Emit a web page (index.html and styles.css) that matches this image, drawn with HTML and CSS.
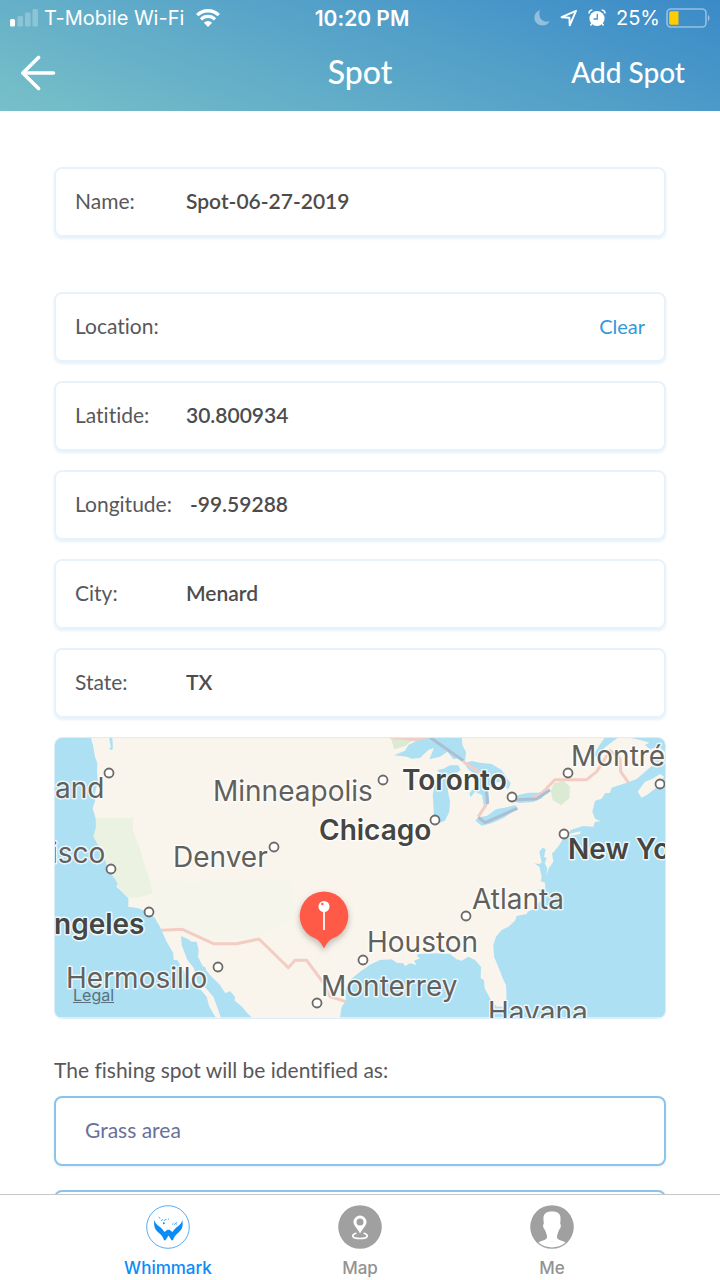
FILE: index.html
```html
<!DOCTYPE html>
<html lang="en">
<head>
<meta charset="utf-8">
<meta name="viewport" content="width=device-width, initial-scale=1">
<title>Spot</title>
<link rel="stylesheet" href="styles.css">
</head>
<body>
<header class="header">
  <div class="status">
    <div class="status-side">
      <svg class="signal" width="28" height="18" viewBox="0 0 28 18" fill="#fff">
        <rect x="0" y="10" width="5" height="7.500" rx="1.500"/>
        <g opacity=".25"><rect x="7.500" y="7" width="5.500" height="10.500" rx="1.500"/><rect x="15" y="3.500" width="5.500" height="14" rx="1.500"/><rect x="22.500" y="0" width="5.500" height="17.500" rx="1.500"/></g>
      </svg>
      <span class="carrier">T-Mobile Wi-Fi</span>
      <svg class="wifi" width="24" height="18" viewBox="0 0 24 18" fill="none" stroke="#fff" stroke-width="3.300">
        <path d="M1.200 6.200a15.300 15.300 0 0 1 21.600 0"/><path d="M5 10.300a9.900 9.900 0 0 1 14 0"/><path d="M12 18 7.900 13.700a5.800 5.800 0 0 1 8.200 0z" fill="#fff" stroke="none"/>
      </svg>
    </div>
    <span class="time">10:20 PM</span>
    <div class="status-side status-right">
      <svg width="16" height="18" viewBox="0 0 16 18"><path d="M6 1C1.500 3 0 6 .5 10c1 7 11.500 9 15.300 2.200C8 14.500 3.500 8 6 1z" fill="#fff" opacity=".4"/></svg>
      <svg class="arrow" width="18" height="18" viewBox="0 0 18 18"><path d="M1.600 8.200 16 1.800 9.700 16.300 9.400 8.700z" fill="none" stroke="#fff" stroke-width="1.900" stroke-linejoin="round"/></svg>
      <svg class="alarm" width="18" height="18" viewBox="0 0 18 18"><circle cx="9" cy="9.500" r="7.600" fill="#fff"/><path d="M1 4.500Q1 1.300 4.300 1M17 4.500Q17 1.300 13.700 1M3.800 14.500 2.500 16.500M14.200 14.500 15.500 16.500" fill="none" stroke="#fff" stroke-width="1.500"/><path d="M9.300 4.800V10H5.500" fill="none" stroke="#4796ca" stroke-width="1.300"/></svg>
      <span>25%</span>
      <svg width="44" height="20" viewBox="0 0 44 20"><rect x="1" y="1" width="39" height="18" rx="4" fill="none" stroke="#fff" stroke-opacity=".45" stroke-width="1.600"/><path d="M42 6.500q3 3.500 0 7z" fill="#fff" opacity=".5"/><path d="M12.500 3.200H5q-1.800 0-1.800 1.800v10q0 1.800 1.800 1.800h7.500z" fill="#fc0"/></svg>
    </div>
  </div>
  <nav class="nav">
    <button class="back" type="button" aria-label="Back"><svg width="36" height="36" viewBox="0 0 36 36" fill="none" stroke="#fff" stroke-width="3.600" stroke-linecap="round" stroke-linejoin="round"><path d="M18.500 2.500 2.800 18l15.700 15.500M3.500 18H33.500"/></svg></button>
    <h1 class="title">Spot</h1>
    <button class="add" type="button">Add Spot</button>
  </nav>
</header>

<main class="content">
  <form class="form">
    <div class="card card-name"><label class="label" for="name">Name:</label><input class="value" id="name" value="Spot-06-27-2019"></div>
    <div class="stack">
      <div class="card"><span class="label">Location:</span><button class="clear" type="button">Clear</button></div>
      <div class="card"><label class="label" for="lat">Latitide:</label><input class="value" id="lat" value="30.800934"></div>
      <div class="card"><label class="label" for="lng">Longitude:</label><input class="value" id="lng" value="-99.59288"></div>
      <div class="card"><label class="label" for="city">City:</label><input class="value" id="city" value="Menard"></div>
      <div class="card"><label class="label" for="state">State:</label><input class="value" id="state" value="TX"></div>
      <div class="map">
        <svg class="map-art" viewBox="55 738 610 280" preserveAspectRatio="xMidYMid slice">
          <rect x="55" y="738" width="610" height="280" fill="#f9f5ed"/>
          <g transform="translate(50 730) scale(.33333)">
            <path d="M135 264H250L248 300 268 350 285 410 300 450 308 490 270 502 235 503 203 470 185 435 150 355 128 320z" fill="#ebf2e2"/>
            <path d="M300 450 420 455 720 450 740 560 620 620 500 635 400 595 330 585 308 500z" fill="#f5f5eb"/>
            <path d="M15 20H122L130 50 135 80 142 100 141 125 144 155 135 190 136 210 128 235 137 265 138 290 130 320 150 355 165 390 180 430 196 448 203 462 199 470 210 480 235 505 235 530 265 535 300 548 315 565 330 590 350 635 370 670 371 690 382 690 405 730 417 755 440 765 470 800 478 830 497 862H15z" fill="#aee0f3"/>
            <path d="M393 618 415 628 425 635 440 635 446 660 444 680 458 708 480 735 510 765 526 790 540 783 555 800 554 812 578 832 592 850 605 862H512L505 840 490 800 468 775 442 758 432 715 412 690 395 645z" fill="#aee0f3"/>
            <path d="M177 22 182 50 178 58 185 60 189 55 187 24z" fill="#aee0f3"/>
            <path d="M460 708 468 714 466 721 460 716z" fill="#aee0f3"/>
          </g>
          <g transform="translate(360 730) scale(.33333)" fill="#aee0f3">
            <path d="M-60 862-55 830-42 812-45 780-30 750 0 725 30 704 60 690 95 688 110 698 130 700 135 708 150 700 170 705 162 692 180 685 170 678 175 672 230 670 270 672 290 688 305 692 325 680 345 690 363 710 362 745 372 750 374 775 390 805 410 830 430 830 440 800 438 765 428 745 415 710 402 680 400 645 408 620 425 600 445 590 465 572 470 558 500 552 503 545 520 538 530 525 545 510 558 490 552 484 533 480 556 473 555 458 542 454 545 440 538 410 522 400 537 402 545 398 538 365 548 353 557 358 552 380 560 385 554 400 562 415 558 438 566 415 580 395 576 370 582 365 598 345 612 322 660 312 662 304 625 312 632 300 670 288 700 290 705 275 722 274 705 266 697 245 705 212 725 206 735 190 750 188 755 173 770 168 800 158 830 147 850 130 875 108 915 93V862z"/>
            <path d="M102 76 135 62 145 45 170 32 182 20H305L307 45 318 66 315 95 297 84 280 88 262 65 240 80 208 88 222 54 205 60 180 84 155 86 140 80z"/>
            <path d="M220 218 218 195 228 150 238 130 232 120 250 116 270 106 295 106 302 120 272 140 275 155 263 180 270 215 268 245 255 272 230 282 222 265z"/>
            <path d="M312 100 335 93 360 98 395 102 425 120 435 135 452 160 445 178 420 155 402 160 385 182 388 215 372 230 366 195 345 185 332 202 328 190 354 160 345 135 325 118z"/>
            <path d="M346 272 355 262 380 258 408 238 440 232 465 225 474 235 430 264 395 280 365 287z"/>
            <path d="M450 212 475 195 505 188 535 188 570 175 545 205 520 216 480 219z"/>
            <path d="M700 78 715 50 735 22H775L735 52 720 82zM795 20H915V65L895 50 870 58 855 45 868 38 840 30z"/>
            <path d="M875 82 915 75V98L885 96z"/>
          </g>
          <g transform="translate(360 730) scale(.33333)">
            <path d="M833 185 855 155 878 146 900 132 912 140 890 172 865 192 845 203z" fill="#f9f5ed"/>
            <path d="M572 183 582 160 610 152 630 170 628 205 603 226 578 210zM92 22H170L135 48 103 58z" fill="#dbead3"/>
          </g>
          <g transform="translate(50 730) scale(.33333)" fill="none" stroke="#f3cdc4" stroke-width="9" stroke-linejoin="round">
            <path d="M333 601 397 598 490 641H560L627 627 715 713 735 691H770L825 765 840 800 888 815"/>
            <path d="M1020 21 1095 29 1130 21M1435 208 1470 195 1515 149H1610L1640 125 1680 62 1710 85 1712 125 1735 157M1240 95 1300 135M1310 222 1285 260"/>
            <path d="M1140 22 1240 92M1295 130 1310 190 1313 222M1285 262 1305 278 1402 235M1390 210 1460 206 1500 180" stroke="#adbdd2"/>
          </g>
          <g class="city-names">
            <text x="55" y="798">and</text>
            <text x="51" y="863">isco</text>
            <text x="213" y="801">Minneapolis</text>
            <text x="173" y="867">Denver</text>
            <text x="66" y="988">Hermosillo</text>
            <text x="321" y="996">Monterrey</text>
            <text x="367" y="952">Houston</text>
            <text x="472" y="909">Atlanta</text>
            <text x="571" y="766">Montréal</text>
            <text x="488" y="1022">Havana</text>
            <g class="major">
              <text x="54" y="934">ngeles</text>
              <text x="319" y="840">Chicago</text>
              <text x="402" y="790">Toronto</text>
              <text x="568" y="859">New York</text>
            </g>
          </g>
          <g fill="#fff" stroke="#6d6a66" stroke-width="1.800">
            <circle cx="109" cy="773" r="4.500"/><circle cx="111" cy="869" r="4.500"/><circle cx="149" cy="912" r="4.500"/><circle cx="218" cy="967" r="4.500"/><circle cx="274" cy="847" r="4.500"/><circle cx="383" cy="780" r="4.500"/><circle cx="435" cy="820" r="4.500"/><circle cx="512" cy="797" r="4.500"/><circle cx="568" cy="773" r="4.500"/><circle cx="660" cy="784" r="4.500"/><circle cx="564" cy="834" r="4.500"/><circle cx="466" cy="916" r="4.500"/><circle cx="363" cy="960" r="4.500"/><circle cx="317" cy="1003" r="4.500"/>
          </g>
          <g class="pin">
            <path d="M324 948.500C322 945 320 941 315.500 938.600A24.300 24.300 0 1 1 332.500 938.600C328 941 326 945 324 948.500z" fill="#ff5a47"/>
            <path d="M324 909V930" stroke="#fff" stroke-width="1.800"/><circle cx="324" cy="906.500" r="5.500" fill="#fff"/><circle cx="322.300" cy="904" r="1.200" fill="#ff5a47"/>
          </g>
        </svg>
        <a class="legal" href="#legal">Legal</a>
      </div>
    </div>
    <p class="prompt">The fishing spot will be identified as:</p>
    <div class="choices">
      <button class="choice" type="button">Grass area</button>
      <button class="choice" type="button" aria-label="Next option"></button>
    </div>
  </form>
</main>

<nav class="tabs">
  <a class="tab active" href="#whimmark">
    <svg width="44" height="44" viewBox="0 0 44 44"><circle cx="22" cy="22" r="21.300" fill="#fff" stroke="#58adf7"/><path d="M8.300 15C10 21 15.500 21.500 18.500 27L21.500 24.800H23.500L26.500 27C29.500 21.500 35 21 36.300 15 37.500 21 36 25 32 28 29.500 30 28 32 27 35.300H25.500L22.500 30.500 19.500 35.300H18C17 32 15.500 30 13 28 9 25 7.500 21 8.300 15z" fill="#0a8cf7"/><g fill="none" stroke="#3ba2f6" stroke-width=".9"><path d="M12.800 11.800 14 13.500M14.800 15.700 17 14.500M17.800 15.500 20.500 14.300M21.800 14.700 23 13.800M26 19.500 27.500 18.200M28.200 19.800 31 17.300M29 17.800 30.500 19.500"/></g><circle cx="17.800" cy="18.300" r="1" fill="#0a8cf7"/></svg>
    <span>Whimmark</span>
  </a>
  <a class="tab" href="#map">
    <svg width="44" height="44" viewBox="0 0 44 44"><circle cx="22" cy="22" r="21.800" fill="#a0a0a0"/><path d="M22 28.500C19 23 15.500 20.500 15.500 17a6.500 6.500 0 0 1 13 0C28.500 20.500 25 23 22 28.500z" fill="#fff"/><circle cx="22" cy="17" r="3.500" fill="#a0a0a0"/><path d="M18.500 28.300C12.500 29.500 13.500 33.500 22 33.500S31.500 29.500 25.500 28.300" fill="none" stroke="#fff" stroke-width="1.600"/></svg>
    <span>Map</span>
  </a>
  <a class="tab" href="#me">
    <svg width="44" height="44" viewBox="0 0 44 44"><circle cx="22" cy="22" r="21.800" fill="#a0a0a0"/><path d="M22 6.500C28 6.500 31 9 30.500 14.500L30.200 19C31.500 19.500 30.800 23.500 29 25 28 28 27 29.500 27 32 27 35.500 33 35.500 35.500 37.500 28 44 16 44 8.500 37.500 11 35.500 17 35.500 17 32 17 29.500 16 28 15 25 13.200 23.500 12.500 19.500 13.800 19L13.500 14.500C13 9 16 6.500 22 6.500z" fill="#fff"/></svg>
    <span>Me</span>
  </a>
</nav>
</body>
</html>
```
FILE: styles.css
```css
* { box-sizing: border-box; }

body {
  margin: 0;
  height: 100vh;
  display: flex;
  flex-direction: column;
  overflow: hidden;
  background: #fff;
  color: #58585a;
  font-family: Lato, "Open Sans", sans-serif;
  font-size: 21px;
  font-variant-ligatures: none;
}

button, input {
  font: inherit;
  font-variant-ligatures: none;
  color: inherit;
  background: none;
  border: 0;
  padding: 0;
  margin: 0;
}

svg { display: block; flex: none; }

.header {
  flex: none;
  color: #fff;
  background: linear-gradient(20deg, #78c0c8, #3a8ac8);
}

.status {
  display: grid;
  grid-template-columns: 1fr auto 1fr;
  align-items: center;
  height: 36px;
  padding: 0 10px;
  font-family: Inter, sans-serif;
  font-size: 20px;
}

.status-side { display: flex; align-items: center; gap: 6px; }
.carrier { margin-right: 6px; }
.status-right { justify-content: flex-end; }
.arrow { margin: 0 4px; }
.alarm { margin-right: 4px; }
.time { padding-left: 4px; font-size: 21px; font-weight: 600; }

.nav {
  display: grid;
  grid-template-columns: 1fr auto 1fr;
  align-items: center;
  height: 75px;
  padding: 0 35px 4px 20px;
}

.title { margin: 0; font-size: 32px; font-weight: 500; padding-left: 15px; }
.back { justify-self: start; padding-top: 3px; }
.add { justify-self: end; font-size: 28px; font-weight: 500; }

.content { flex: 1; min-height: 0; overflow: hidden; }
.form { padding: 56px 54px 0; }
.card-name { margin-bottom: 55px; }
.stack { display: flex; flex-direction: column; gap: 19px; }

.card {
  display: flex;
  align-items: center;
  gap: 18px;
  height: 70px;
  padding: 0 19px 3px;
  border: 2px solid #e7f2fb;
  border-radius: 8px;
  box-shadow: 0 2px 3px #e7f1f9;
}

.label { min-width: 93px; }
.value { flex: 1; min-width: 0; font-weight: 600; color: #4c4c4e; }
.clear { margin-left: auto; font-size: 20px; color: #3299dc; }

.map {
  position: relative;
  height: 282px;
  border: 1px solid #dcedf8;
  border-radius: 8px;
  overflow: hidden;
}

.map-art { width: 100%; height: 100%; }

.city-names {
  font-family: Inter, sans-serif;
  font-size: 28px;
  fill: #62605b;
  stroke: #fff;
  stroke-width: 3px;
  stroke-opacity: .75;
  stroke-linejoin: round;
  paint-order: stroke;
}

.major { font-weight: 600; fill: #454542; }
.pin { filter: drop-shadow(0 3px 3px rgba(0, 0, 0, .25)); }

.legal {
  position: absolute;
  left: 18px;
  bottom: 13px;
  font-family: Inter, sans-serif;
  font-size: 16px;
  line-height: 20px;
  color: #58717c;
}

.prompt { margin: 38px 0 13px; line-height: 26px; }
.choices { display: flex; flex-direction: column; gap: 24px; }

.choice {
  height: 70px;
  padding: 0 29px 3px;
  text-align: left;
  color: #69719b;
  border: 2px solid #8ac4e8;
  border-radius: 8px;
  box-shadow: 0 1px 3px #e7f1f9;
}

.tabs {
  flex: none;
  display: flex;
  height: 86px;
  padding: 10px 10% 0;
  border-top: 1px solid #c8c8c8;
  background: #fff;
}

.tab {
  flex: 1;
  display: flex;
  flex-direction: column;
  align-items: center;
  gap: 8px;
  font-family: Inter, sans-serif;
  font-size: 17px;
  font-weight: 500;
  line-height: 22px;
  color: #929292;
  text-decoration: none;
}

.active { color: #0a8cf7; }
```
